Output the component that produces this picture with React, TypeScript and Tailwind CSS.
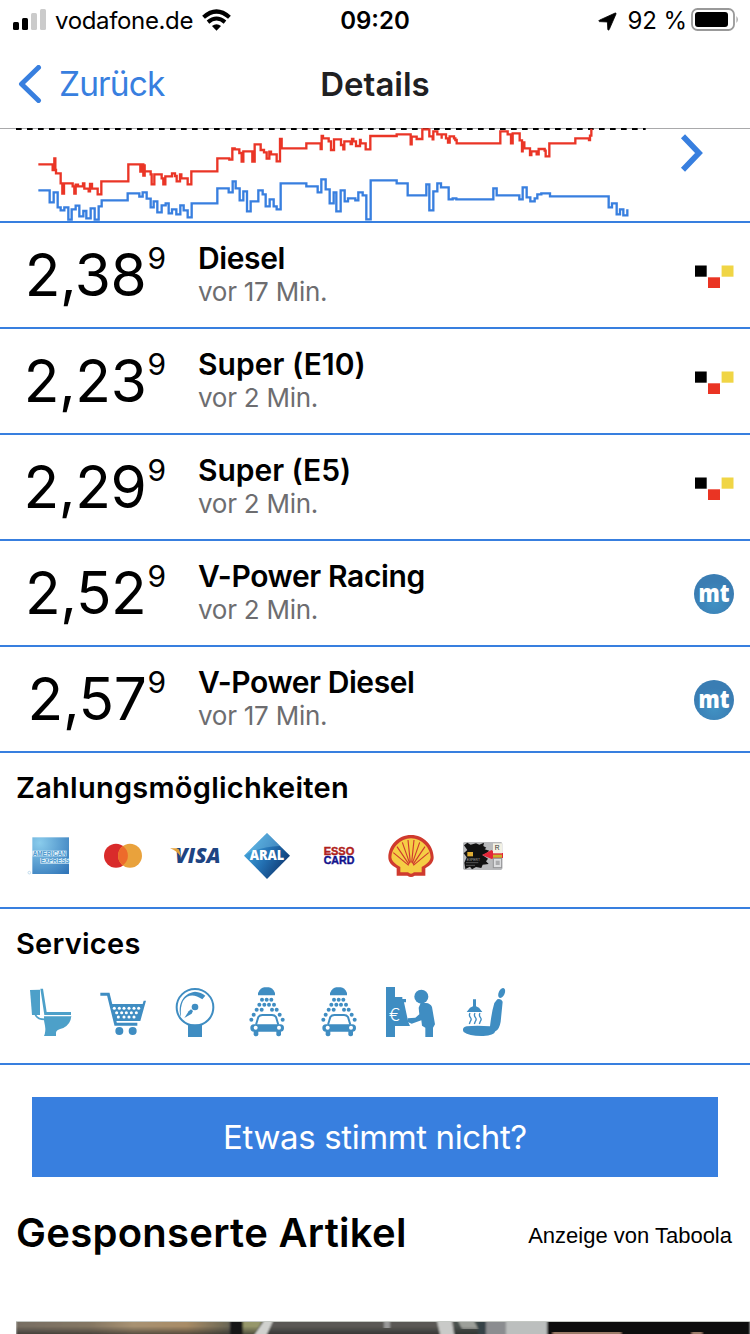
import React from "react";

const prices = [
    { name: "Diesel", price: "2,38", updated: "vor 17 Min.", source: "mtsk", tracking: "tracking-[-0.4px]" },
    { name: "Super (E10)", price: "2,23", updated: "vor 2 Min.", source: "mtsk", tracking: "tracking-[0.05px]" },
    { name: "Super (E5)", price: "2,29", updated: "vor 2 Min.", source: "mtsk", tracking: "tracking-[-0.05px]" },
    { name: "V-Power Racing", price: "2,52", updated: "vor 2 Min.", source: "mt", tracking: "tracking-[-0.37px]" },
    { name: "V-Power Diesel", price: "2,57", updated: "vor 17 Min.", source: "mt", tracking: "tracking-[-0.42px]" }
];

const RED_LINE =
    "M115 133H158V150H163V115H166V150H168V160H182V190H187V221H192V190H218V199H223V221H227V194H234V199H249V190H253V206H266V214H270V192H276V206H293V223H304V184H385V133H421V155H425V133H430V167H434V133V154H452V163H455V193H463V163H485V175H490V193H496V169H516V160H525V168H530V184H540V163H544V175H563V193H574V154H652V115H688V119H697V85H704V88H718V99H725V125H730V94H757V125H764V73H782V90H792V97H800V116H808V95H813V103H830V124H840V57H845V85H919V70H962V87H965V48H969V55H986V64H993V90H1002V58H1023V75H1030V88H1033V64H1052V72H1056V57H1060V64H1068V78H1080V60H1082V70H1097V88H1111V48H1190V43H1232V73H1235V50H1250V57H1267V28H1288V49H1298V58H1300V34H1312V43H1325V56V43H1338V55H1344V68H1349V49H1362V55H1366V60H1370V70H1501V34H1523V43H1533V70H1538V40H1559V61H1566V94H1568V67H1573V85H1590V105H1594V94H1610V103H1616V87H1634V92H1637V109H1648V70H1726V55H1767V60H1770V47H1774V26";

const BLUE_LINE =
    "M115 211H149V247H161V217H173V262H182V271H193V262H205V299H215V268H227V257H238V289H250V273H259V295H272V265H284V299H296V259H305V241H383V220H418V230H428V217H440V236H452V262H461V244H472V277H485V256H497V250H506V280H516V268H529V283H541V256H551V271H563V292H575V250H652V205H686V217H698V184H707V205H719V241H730V214H741V274H752V244H775V211H788V223H797V259H809V238H821V259H830V268H842V190H919V199H953V217H964V178H977V208H989V250H1001V217H1009V274H1022V211H1034V244H1044V235H1066V241H1075V217H1088V226H1099V298H1112V181H1190V190H1223V226H1279V193H1288V271H1300V214H1312V190H1323V202H1346V238H1358V235H1369V238H1480V205H1490V226H1558V238H1568V202H1580V232H1591V244H1604V235H1612V223H1624V220H1650V229H1826V262H1836V250H1850V283H1860V268H1870V286H1882V268";

const StatusBar = () => (
    <div className="relative flex h-10 items-center justify-between text-[24px] leading-none text-black">
        <div className="flex items-center pl-[13px]">
            <svg className="mb-[2px] h-[21px] w-[33px]" viewBox="0 0 33 21">
                <rect x="0" y="13" width="6" height="8" rx="1.5" />
                <rect x="9" y="9" width="6" height="12" rx="1.5" />
                <rect x="18" y="4" width="6" height="17" rx="1.5" fill="#cbcbcb" />
                <rect x="27" y="0" width="6" height="21" rx="1.5" fill="#cbcbcb" />
            </svg>
            <span className="ml-[9px] pt-[2px] tracking-[-0.35px]">vodafone.de</span>
            <svg className="ml-[9px] h-[22px] w-[29px]" viewBox="0 0 30 22">
                <path d="M15 22L10.3 17.3Q15 13.6 19.7 17.3Z" />
                <path d="M6.2 13.2Q15 5.8 23.8 13.2" fill="none" stroke="#000" strokeWidth="4.1" />
                <path d="M1.6 8.2Q15 -3.8 28.4 8.2" fill="none" stroke="#000" strokeWidth="4.3" />
            </svg>
        </div>
        <span className="absolute left-1/2 -translate-x-1/2 pt-[2px] font-semibold">09:20</span>
        <div className="flex items-center pr-[11px]">
            <svg className="mt-[2px] h-[19px] w-[19px]" viewBox="0 0 19 19">
                <path d="M17.2 1Q18.4 0.8 18 2L11.2 17.6Q10.4 18.8 9.8 17.4L9.4 10L1.4 9.6Q0 9 1.4 8.2Z" stroke="#000" strokeWidth="0.8" />
            </svg>
            <span className="ml-[11px] pt-[2px] tracking-[-0.1px]">92 %</span>
            <svg className="mb-px ml-[4px] h-6 w-12" viewBox="0 0 48 24">
                <rect x="1" y="1" width="42" height="21" rx="5.5" fill="none" stroke="#999" strokeWidth="1.8" />
                <rect x="4" y="4" width="33" height="15" rx="3" />
                <path d="M45.5 8Q48 11.5 45.5 15Z" fill="#999" />
            </svg>
        </div>
    </div>
);

const NavBar = () => (
    <div className="relative flex h-[88px] items-center pl-[18px]">
        <svg className="h-[38px] w-[24px]" viewBox="0 0 24 38">
            <path d="M20.5 2.5L3.5 19L20.5 35.5" fill="none" stroke="#387fdf" strokeWidth="5" strokeLinecap="round" strokeLinejoin="round" />
        </svg>
        <span className="ml-[17px] pt-px text-[33.5px] leading-none tracking-[-0.9px] text-[#387fdf]">Zurück</span>
        <h1 className="absolute left-1/2 -translate-x-1/2 text-[33px] leading-none font-semibold text-[#202022]">Details</h1>
    </div>
);

const PriceChart = () => (
    <svg className="block h-[93px] w-full" viewBox="0 24 2250 279">
        <path d="M0 25.5H2250" stroke="#a9a9ab" strokeWidth="3" />
        <path d="M48 27H1937" stroke="#000" strokeWidth="6" strokeDasharray="17 16" />
        <g fill="none" strokeWidth="7">
            <path d={RED_LINE} stroke="#ea3526" />
            <path d={BLUE_LINE} stroke="#387fdf" />
        </g>
        <path d="M2049 49L2097 99L2049 149" fill="none" stroke="#387fdf" strokeWidth="17" />
    </svg>
);

const SourceIcon = ({ source }: { source: string }) => {
    if (source === "mt") {
        return (
            <svg className="h-10 w-10" viewBox="0 0 40 40">
                <defs>
                    <radialGradient id="mt-fill" cy="0.7">
                        <stop offset="0" stopColor="#4192c4" />
                        <stop offset="1" stopColor="#3a7db3" />
                    </radialGradient>
                </defs>
                <circle cx="20" cy="20" r="20" fill="url(#mt-fill)" />
                <text x="20" y="28" textAnchor="middle" textLength="31" lengthAdjust="spacingAndGlyphs" fontSize="25" fontWeight="800" fill="#fff" fontFamily="Open Sans, sans-serif">
                    mt
                </text>
            </svg>
        );
    }

    return (
        <svg className="h-10 w-10" viewBox="0 0 40 40">
            <rect x="1" y="9.5" width="11.7" height="11.2" />
            <rect x="14" y="21.3" width="12" height="10.7" fill="#ea3423" />
            <rect x="27.6" y="9.5" width="11.9" height="11.2" fill="#f0d545" />
        </svg>
    );
};

const PriceRow = ({ item }: { item: (typeof prices)[number] }) => (
    <div className="flex h-[106px] border-b-2 border-[#387fdf] pr-4">
        <div className="flex w-[198px] justify-end pr-[32px]">
            <span className="pt-[22px] pr-[1px] text-[58.5px] leading-[60px] tracking-[-0.4px]">{item.price}</span>
            <span className="pt-[20px] text-[30px] leading-[30px]">9</span>
        </div>
        <div className="flex-1 pt-[17px]">
            <div className={`text-[30px] leading-9 font-semibold ${item.tracking}`}>{item.name}</div>
            <div className="text-[26px] leading-[31px] tracking-[-0.25px] text-[#6d6d70]">{item.updated}</div>
        </div>
        <div className="flex items-center pt-[2px]">
            <SourceIcon source={item.source} />
        </div>
    </div>
);

const Amex = () => (
    <svg className="h-14 w-14" viewBox="69 24 168 168">
        <defs>
            <radialGradient id="amex-fill" cx="0.2" cy="0.15" r="1.1">
                <stop offset="0" stopColor="#8accec" />
                <stop offset="1" stopColor="#3176b9" />
            </radialGradient>
        </defs>
        <rect x="97" y="52" width="110" height="110" fill="url(#amex-fill)" />
        <rect x="97" y="92" width="103" height="17" fill="#dceef8" />
        <rect x="121" y="114" width="86" height="17" fill="#dceef8" />
        <g fontFamily="Liberation Sans, sans-serif" fontWeight="700" fontSize="19" fill="#4f9bd0">
            <text x="98" y="107" textLength="102" lengthAdjust="spacingAndGlyphs">AMERICAN</text>
            <text x="122" y="129" textLength="86" lengthAdjust="spacingAndGlyphs">EXPRESS</text>
        </g>
        <circle cx="88" cy="158" r="4" fill="none" stroke="#a8cde6" strokeWidth="2" />
    </svg>
);

const Mastercard = () => (
    <svg className="h-14 w-14" viewBox="285 24 168 168">
        <circle cx="348" cy="107" r="36" fill="#d92b2b" />
        <circle cx="390" cy="107" r="36" fill="#e9a23c" />
        <path d="M369 78A36 36 0 0 1 369 136A36 36 0 0 1 369 78Z" fill="#ed6a2b" />
    </svg>
);

const Visa = () => (
    <svg className="h-14 w-14" viewBox="501 24 168 168">
        <text x="525" y="129" textLength="137" lengthAdjust="spacingAndGlyphs" fontFamily="Open Sans, sans-serif" fontWeight="800" fontStyle="italic" fontSize="61" fill="#1e4482">
            VISA
        </text>
        <path d="M510 85H530Q538 86 539 94L543 112Q532 92 510 85Z" fill="#e3a13a" />
    </svg>
);

const Aral = () => (
    <svg className="h-14 w-14" viewBox="717 24 168 168">
        <defs>
            <linearGradient id="aral-fill" x1="0" y1="0.2" x2="1" y2="0.8">
                <stop offset="0" stopColor="#4bb0e4" />
                <stop offset="0.5" stopColor="#2370b2" />
                <stop offset="1" stopColor="#0c2f66" />
            </linearGradient>
        </defs>
        <path d="M801 39L870 107L801 177L732 107Z" fill="url(#aral-fill)" />
        <path d="M801 39L840 78Q770 82 732 107Z" fill="#8dd0f0" opacity="0.35" />
        <text x="749" y="121" textLength="104" lengthAdjust="spacingAndGlyphs" fontFamily="Open Sans, sans-serif" fontWeight="800" fontSize="41" fill="#fff">
            ARAL
        </text>
    </svg>
);

const EssoCard = () => (
    <svg className="h-14 w-14" viewBox="153 24 168 168">
        <g fontFamily="Liberation Sans, sans-serif" fontWeight="700" fontSize="30" strokeWidth="1.2">
            <text x="191" y="105" textLength="92" lengthAdjust="spacingAndGlyphs" fill="#b0221c" stroke="#b0221c">ESSO</text>
            <text x="191" y="131" textLength="92" lengthAdjust="spacingAndGlyphs" fill="#12128c" stroke="#12128c">CARD</text>
        </g>
    </svg>
);

const Shell = () => (
    <svg className="h-14 w-14" viewBox="369 24 168 168">
        <path
            d="M453 45C492 45 520 76 521 112C521 126 512 136 496 145V167H464Q453 175 442 167H410V145C394 136 385 126 385 112C386 76 414 45 453 45Z"
            fill="#cf3a2e"
        />
        <path
            d="M453 55C487 56 511 84 512 112Q511 124 495 135L485 141V157H462Q453 165 444 157H421V141L411 135Q395 124 394 112C395 84 419 56 453 55Z"
            fill="#f5cd45"
        />
        <path
            d="M446 136L400 98M447 133L411 80M449 130L427 67M451 128L444 60M455 128L462 60M457 130L479 67M459 133L495 80M460 136L506 98"
            fill="none"
            stroke="#cf3a2e"
            strokeWidth="3.4"
        />
    </svg>
);

const TankCard = () => (
    <svg className="h-14 w-14" viewBox="585 24 168 168">
        <rect x="609" y="66" width="118" height="84" rx="5" fill="#b9babc" />
        <path d="M612 76L622 68L632 74L648 70L658 74L672 68L670 78L679 83L674 88L688 92L679 100L667 105L684 116L678 124L686 132L668 134L664 144L648 141L636 148L630 140L616 147L613 128L620 112L611 100L622 90Z" fill="#111" />
        <path d="M666 105L695 90L704 99H729V114H704L695 117Z" fill="#e32638" />
        <rect x="622" y="96" width="17" height="13" fill="#e0ad35" />
        <rect x="699" y="70" width="27" height="30" fill="#f2f1e4" />
        <rect x="699" y="104" width="27" height="9" fill="#cbb42c" />
        <rect x="700" y="115" width="25" height="28" fill="#dddee0" stroke="#939496" strokeWidth="3" />
        <rect x="707" y="122" width="12" height="13" fill="#aaabad" />
        <text x="704" y="90" fontSize="20" fontFamily="Liberation Sans, sans-serif" fill="#333">R</text>
        <text x="620" y="122" fontSize="10" fontFamily="Liberation Sans, sans-serif" fill="#aaa">EXPERT</text>
        <path d="M618 128H655M618 136H645" stroke="#777" strokeWidth="2" />
    </svg>
);

const Toilet = () => (
    <svg className="h-14 w-14" viewBox="69 27 168 168" fill="#4da0c9">
        <path d="M90 45L120 44L120 120H96Z" />
        <path d="M121 41H129L140 111H213V120H133Z" />
        <path d="M105 116Q110 134 136 133" fill="none" stroke="#4da0c9" strokeWidth="5" />
        <path d="M132 124H214Q212 148 190 159Q168 164 168 173V183H132Q138 170 135 152Q131 140 132 124Z" />
    </svg>
);

const Cart = () => (
    <svg className="h-14 w-14" viewBox="285 27 168 168">
        <path d="M301 58H325L347 148H412" fill="none" stroke="#3f8dc2" strokeWidth="9" />
        <path d="M331 87H428L431 77H438L421 138H345Z" fill="#3f8dc2" />
        <g fill="#fff">
            {[343, 358, 372, 387, 402, 416].map((x) => (
                <circle key={x} cx={x} cy="100" r="4.6" />
            ))}
            {[350, 365, 379, 394, 409].map((x) => (
                <circle key={x} cx={x} cy="113" r="4.6" />
            ))}
            {[355, 372, 387, 402].map((x) => (
                <circle key={x} cx={x} cy="126" r="4.6" />
            ))}
        </g>
        <circle cx="358" cy="168" r="12" fill="#3f8dc2" />
        <circle cx="398" cy="168" r="12" fill="#3f8dc2" />
    </svg>
);

const Gauge = () => (
    <svg className="h-14 w-14" viewBox="501 27 168 168" fill="#3f8dc2">
        <circle cx="585" cy="97" r="55" fill="none" stroke="#3f8dc2" strokeWidth="6" />
        <path d="M543 126C532 96 545 55 585 50Q604 51 616 62L607 73Q570 48 549 78Q540 96 543 126Z" />
        <circle cx="585" cy="96" r="10" />
        <path d="M553 129L566 109L573 103L579 108L575 116Z" />
        <rect x="564" y="148" width="42" height="38" />
    </svg>
);

const CarWash = () => (
    <svg className="h-14 w-14" viewBox="153 27 168 168" fill="#3f8dc2">
        <path d="M210 61V54Q218 38 229 37H242Q254 38 261 54V61Z" />
        {[[222, 74], [236, 74], [250, 74], [214, 89], [229, 89], [243, 89], [258, 89], [206, 104], [221, 104], [252, 104], [266, 104], [197, 119], [275, 119], [190, 134], [284, 134]].map(([x, y]) => (
            <circle key={`${x}-${y}`} cx={x} cy={y} r="6" />
        ))}
        <path d="M204 149L211 126Q215 120 223 120H252Q260 120 264 126L271 149" fill="none" stroke="#3f8dc2" strokeWidth="6" />
        <rect x="187" y="148" width="101" height="22" rx="11" />
        <rect x="197" y="164" width="14" height="20" rx="6" />
        <rect x="265" y="164" width="14" height="20" rx="6" />
        <circle cx="203" cy="158" r="6" fill="#fff" />
        <circle cx="273" cy="158" r="6" fill="#fff" />
    </svg>
);

const PayDesk = () => (
    <svg className="h-14 w-14" viewBox="369 27 168 168" fill="#3f8dc2">
        <path d="M378 36H405V66H427V72H438V82H432L445 142L450 153H405V186H378Z" />
        <circle cx="484" cy="65" r="21" />
        <path d="M482 84H498Q511 85 516 96L525 148L519 158V186H496V158L486 152L484 136L455 146L443 141V130L466 128L478 118L476 98Z" />
        <text x="386" y="137" fontSize="50" fontWeight="300" fontFamily="Inter, sans-serif" fill="#fff" textLength="35" lengthAdjust="spacingAndGlyphs">€</text>
    </svg>
);

const SeatCare = () => (
    <svg className="h-14 w-14" viewBox="585 27 168 168" fill="#3f8dc2">
        <ellipse cx="725" cy="54" rx="9" ry="16" transform="rotate(24 725 54)" />
        <path d="M712 73Q724 70 728 80L722 140Q718 164 706 169Q702 182 670 183Q628 184 611 171Q604 158 620 154Q650 150 690 154Q695 110 703 84Z" />
        <path d="M639 73H648V94L657 98L667 111H620L630 98L639 94Z" />
        <path d="M630 114Q626 121 631 127T631 139L628 147M645 114Q641 121 646 127T646 139L643 147M660 114Q656 121 661 127T661 139L658 147" fill="none" stroke="#3f8dc2" strokeWidth="4" />
    </svg>
);

const IconSection = ({ title, children }: { title: string; children: React.ReactNode }) => (
    <section className="h-[156px] border-b-2 border-[#387fdf]">
        <h2 className="pt-[17px] pl-4 text-[29px] leading-9 font-semibold tracking-[0.25px]">{title}</h2>
        <div className="mt-[22px] flex gap-4 pl-[23px]">{children}</div>
    </section>
);

const ArticleImage = () => (
    <svg className="mt-[63px] ml-4 block h-[13px] w-[734px]" viewBox="16 1321 734 13">
        <defs>
            <linearGradient id="wood" x1="0" x2="1" y1="0" y2="0">
                <stop offset="0" stopColor="#776e63" />
                <stop offset="0.35" stopColor="#857763" />
                <stop offset="0.55" stopColor="#a89272" />
                <stop offset="0.8" stopColor="#a88c66" />
                <stop offset="1" stopColor="#696654" />
            </linearGradient>
            <linearGradient id="shade" x1="0" x2="0" y1="0" y2="1">
                <stop offset="0.4" stopColor="#222" stopOpacity="0" />
                <stop offset="1" stopColor="#222" stopOpacity="0.6" />
            </linearGradient>
            <filter id="soft" x="0" y="0" width="1" height="1">
                <feGaussianBlur stdDeviation="1.2 0.5" />
            </filter>
        </defs>
        <g filter="url(#soft)">
            <rect x="16" y="1321" width="734" height="13" fill="#5a5955" />
            <rect x="16" y="1321" width="213" height="13" fill="url(#wood)" />
            <path d="M243 1321H262L255 1334H243Z" fill="#96976a" />
            <rect x="454" y="1321" width="33" height="13" fill="#4a514d" />
            <path d="M458 1321H474L478 1329H462Z" fill="#9da09a" />
            <rect x="16" y="1321" width="471" height="13" fill="url(#shade)" />
            <rect x="230" y="1321" width="13" height="13" fill="#171716" />
            <path d="M264 1321H273L267 1334H255Z" fill="#d0d1ce" />
            <rect x="384" y="1321" width="6" height="7" fill="#999" />
            <path d="M437 1321H452L454 1334H440Z" fill="#c9cac8" />
            <rect x="478" y="1321" width="8" height="13" fill="#344246" />
            <rect x="486" y="1321" width="20" height="13" fill="#8b8d90" />
            <rect x="506" y="1321" width="41" height="13" fill="#bcbfbe" />
            <rect x="547" y="1321" width="203" height="13" fill="#0a100e" />
            <path d="M553 1333H621M692 1333H702" stroke="#9b7b69" strokeWidth="2" />
        </g>
        <path d="M16 1321.5H750" stroke="#c4c8c3" />
    </svg>
);

const App = () => {
    return (
        <div className="h-[1334px] w-[750px] overflow-hidden bg-white font-['Inter','Liberation_Sans',sans-serif] text-black">
            <StatusBar />
            <NavBar />
            <PriceChart />

            <div className="border-t-2 border-[#387fdf]">
                {prices.map((item) => (
                    <PriceRow key={item.name} item={item} />
                ))}
            </div>

            <IconSection title="Zahlungsmöglichkeiten">
                <Amex />
                <Mastercard />
                <Visa />
                <Aral />
                <EssoCard />
                <Shell />
                <TankCard />
            </IconSection>

            <IconSection title="Services">
                <Toilet />
                <Cart />
                <Gauge />
                <CarWash />
                <CarWash />
                <PayDesk />
                <SeatCare />
            </IconSection>

            <button className="mx-8 mt-8 block h-20 w-[686px] bg-[#387fdf] pt-px text-[33px] tracking-[-0.38px] text-white">Etwas stimmt nicht?</button>

            <div className="flex items-start justify-between pt-[31px] pr-[18px] pl-4">
                <h2 className="text-[40px] leading-[50px] font-semibold tracking-[0.28px]">Gesponserte Artikel</h2>
                <span className="pt-[11px] font-['Liberation_Sans',sans-serif] text-[22px] leading-[33px]">Anzeige von Taboola</span>
            </div>

            <ArticleImage />
        </div>
    );
};

export default App;
